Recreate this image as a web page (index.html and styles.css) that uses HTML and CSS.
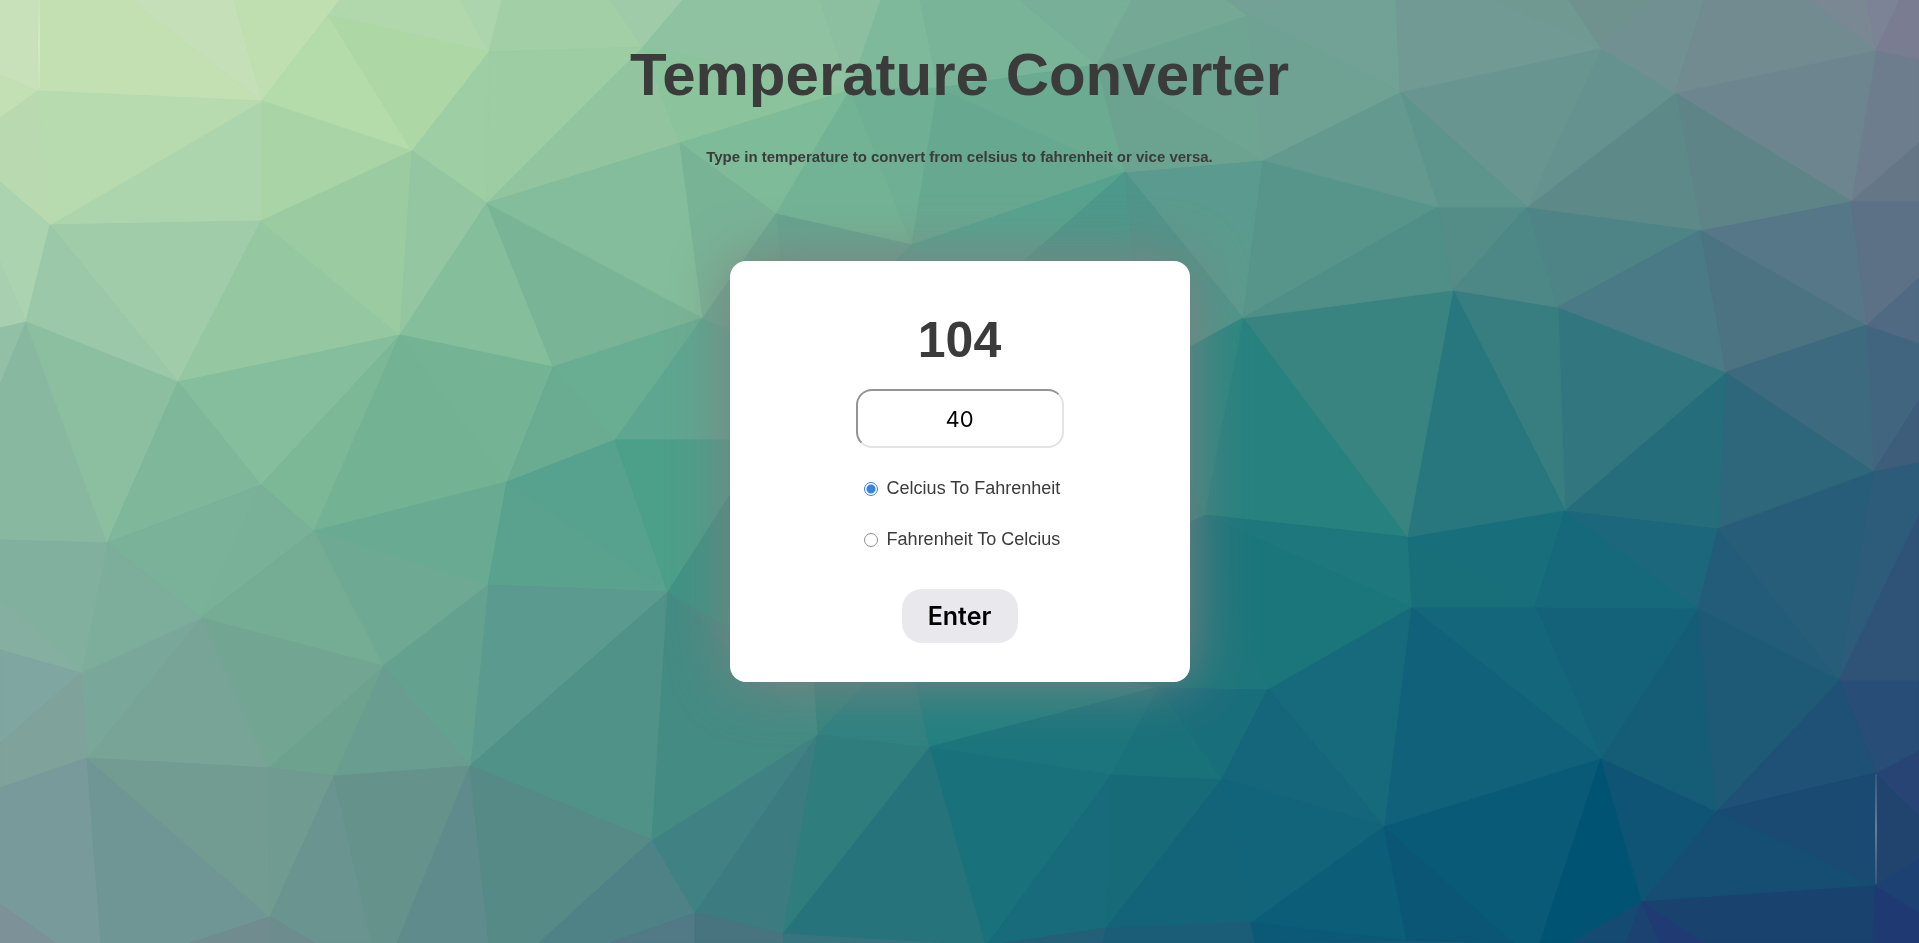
FILE: index.html
```html
<!DOCTYPE html>
<html lang="en">
<head>
  <meta charset="utf-8">
  <meta name="viewport" content="width=device-width, initial-scale=1">
  <title>Temperature Converter</title>
  <link rel="stylesheet" href="styles.css">
</head>
<body>
  <svg class="backdrop" viewBox="0 0 1919 943" preserveAspectRatio="xMidYMid slice" aria-hidden="true">
    <defs>
      <linearGradient id="glint" x1="0" y1="0" x2="0" y2="1">
        <stop offset="0" stop-color="#fff" stop-opacity="0.1"/>
        <stop offset="0.5" stop-color="#fff" stop-opacity="0.3"/>
        <stop offset="1" stop-color="#fff" stop-opacity="0.1"/>
      </linearGradient>
    </defs>
    <g class="mesh" id="mesh"></g>
    <rect x="38" y="0" width="2" height="88" fill="url(#glint)"/>
    <rect x="1875" y="774" width="2" height="110" fill="url(#glint)"/>
  </svg>

  <main class="page">
    <h1 class="title">Temperature Converter</h1>
    <p class="subtitle">Type in temperature to convert from celsius to fahrenheit or vice versa.</p>

    <form class="card" id="converter">
      <output class="result" id="result" for="temperature">104</output>
      <input class="temperature" id="temperature" type="text" inputmode="decimal" value="40" aria-label="Temperature">
      <div class="option">
        <input class="radio" type="radio" name="direction" id="to-fahrenheit" value="f" checked>
        <label for="to-fahrenheit">Celcius To Fahrenheit</label>
      </div>
      <div class="option">
        <input class="radio" type="radio" name="direction" id="to-celcius" value="c">
        <label for="to-celcius">Fahrenheit To Celcius</label>
      </div>
      <button class="submit" type="submit">Enter</button>
    </form>
  </main>
  <script src="script.js"></script>
</body>
</html>
```
FILE: styles.css
```css
* {
  box-sizing: border-box;
}

body {
  margin: 0;
  min-height: 100vh;
  background: #4c9f89;
  color: #3b3b3b;
  font-family: "Liberation Sans", Arial, sans-serif;
}

.backdrop {
  position: fixed;
  inset: 0;
  z-index: -1;
  width: 100%;
  height: 100%;
}

.mesh polygon {
  stroke-width: 1;
  stroke-linejoin: round;
}

.page {
  display: flex;
  flex-direction: column;
  align-items: center;
  padding: 40px 16px;
}

.title {
  margin: 0 0 38px;
  font-size: 60px;
  line-height: 70px;
  text-align: center;
}

.subtitle {
  margin: 0 0 96px;
  font-size: 15px;
  font-weight: bold;
  line-height: 17px;
  text-align: center;
}

.card {
  display: flex;
  flex-direction: column;
  align-items: center;
  width: 460px;
  max-width: 100%;
  padding: 50px 20px 39px;
  border-radius: 16px;
  background: #fff;
  box-shadow: 0 0 60px #808080;
}

.result {
  margin-bottom: 20px;
  font-size: 50px;
  font-weight: bold;
  line-height: 58px;
}

.temperature {
  width: 208px;
  height: 59px;
  margin-bottom: 30px;
  padding: 0 16px;
  border: 2px solid;
  border-color: #949494 #e3e3e3 #e3e3e3 #949494;
  border-radius: 16px;
  background: #fff;
  color: #000;
  font-family: Inter, sans-serif;
  font-size: 22px;
  text-align: center;
}

.option {
  display: flex;
  align-items: center;
  gap: 9px;
  margin: 0 0 30px 5px;
  font-size: 18px;
  line-height: 21px;
}

.radio {
  appearance: none;
  width: 14px;
  height: 14px;
  margin: 0;
  border: 1px solid #8f8f9d;
  border-radius: 50%;
  background: #fff;
}

.radio:checked {
  border-color: #3584e4;
  background: radial-gradient(circle, #3584e4 4px, #fff 5px);
}

.submit {
  min-width: 116px;
  height: 54px;
  margin-top: 9px;
  padding: 0 20px;
  border: 0;
  border-radius: 20px;
  background: #e9e9ed;
  color: #000;
  font-family: Inter, sans-serif;
  font-size: 25px;
  font-weight: 600;
}
```
FILE: script.js
```js
// Shared corner points of the low-poly backdrop.
const points = {
  a: [38, 91], b: [262, 101], c: [328, 15], d: [489, 52], e: [412, 151],
  f: [50, 225], g: [261, 221], h: [487, 203], i: [26, 322], j: [178, 382],
  k: [400, 335], l: [553, 367], m: [615, 440], n: [643, 47], o: [107, 543],
  p: [261, 485], q: [314, 531], r: [507, 482], s: [488, 585], t: [201, 618],
  u: [383, 666], v: [81, 673], w: [87, 758], x: [268, 768], y: [334, 776],
  z: [470, 766], A: [270, 917], B: [668, 592], C: [652, 840], D: [695, 913],
  E: [783, 934], F: [818, 734], G: [930, 747], H: [1112, 774], I: [1222, 779],
  J: [1268, 689], K: [1159, 687], L: [1106, 928], M: [1251, 922], N: [986, 946],
  O: [680, 143], P: [776, 214], Q: [912, 245], R: [703, 318], S: [1125, 172],
  T: [1263, 160], U: [1243, 318], V: [850, 90], W: [938, 88], X: [1097, 65],
  Y: [1247, 15],
  a1: [1400, 92], b1: [1601, 48], c1: [1675, 93], d1: [1876, 50], e1: [1438, 207],
  f1: [1527, 207], g1: [1701, 230], h1: [1851, 201], i1: [1453, 290], j1: [1558, 307],
  k1: [1867, 325], l1: [1726, 372], m1: [1874, 471], n1: [1407, 537], o1: [1565, 510],
  p1: [1718, 528], q1: [1411, 607], r1: [1535, 607], s1: [1698, 608], t1: [1839, 680],
  u1: [1601, 758], v1: [1384, 826], w1: [1716, 811], x1: [1876, 773], y1: [1642, 901],
  z1: [1875, 885], A1: [1407, 940], B1: [1204, 515],
  hA: [790, 358], hB: [1144, 372], hC: [765, 440], hD: [906, 640], hE: [814, 677],
  hF: [940, 335]
};

// Each face: fill, then named points or "x,y" pairs on the outer edge.
const faces = `
c8e1ba 0,0 38,0 a 0,75
c3dfb4 0,75 a 0,118
c3e0b2 a 38,0 130,0 b
c5dfb8 130,0 234,0 b
bfdfb0 b 234,0 340,0 c
b1d8ac c 340,0 460,0 d
add5ad d 460,0 502,0
a3cfa7 d 502,0 610,0 n
a0cba8 610,0 683,0 n
b4dbaa b c e
aed7a6 c d e
9ecfa4 e d h
9ccda3 d n h
91c49f n h O
a9d5a6 b e g
acd4ad b g f
b8daaf a b f
b9dab0 a f 0,182 0,118
acd3af 0,182 f i 0,262
a8cfb0 0,262 i 0,328
a0cca9 f g j
9bc8a9 f j i
95c8a1 g k j
9bcca1 g e k
93c6a1 e h k
84be9b h l k
79b496 h R l
83bd9b h O R
92c0a6 0,328 i 0,385
89b8a1 0,385 i o 0,540
8bbfa0 i j o
85be9c j k p
7fb79b j p o
7cb796 k p q
73b394 k q r
74b495 k l r
69ac91 l r m
69ad92 l m R
78b198 p q t
79b199 p o t
69ab92 q r s
6da993 q s u
74ac94 q u t
57a28e r m B
5aa28e r B s
5ea68f m R hA hC
4c9f89 m hC B
5b9a8e s B z
509188 B z C
65a18f s u z
699d90 u y z
6da28f u x y
72a693 t u x
77a497 t x w
79a79a t w v
7dad9b o t v
82b09f 0,540 o v 0,597
85afa1 0,597 v 0,650
7fa6a0 0,650 v 0,743
7fa29a v w 0,788 0,743
789a9a w 0,788 0,904 55,943 101,943
7c9198 0,904 55,943 0,943
709595 w 101,943 190,943 A
729c92 w x A
6f9b91 x y A
69948f A y 372,943 315,943
65938c y z 397,943 372,943
608b8c z 397,943 489,943
568a86 z C 539,943 489,943
4e8286 C 539,943 610,943 D
517986 D 610,943 695,943
718c8e A 190,943 270,943
6d8c8d A 270,943 315,943
408283 C D F
3c7c81 F D E
307d7d F G E
27737c G E N
448b83 B C F
478b84 B hE F
3f9384 B hC hE
37857f F hE hD
2f8280 F hD G
238080 G hD K
47747f D 695,943 784,943 E
37747f E N 784,943
19727b G H N
186b7a H L N
176b79 H I L
136379 I L M
245f78 N L 1103,943
1b5d77 L 1103,943 1255,943 M
155a76 A1 1255,943 1514,943
0b5977 M A1 1255,943
1c757c G K H
19717a K H I
196e7b K J I
1c767b K B1 J
1d777c hD B1 K
2a8480 hB B1 hD
0b5d78 M v1 A1
0b5575 v1 A1 1514,943
085a77 v1 u1 1540,943 1514,943
015374 u1 y1 1572,943 1540,943
154a73 y1 1572,943 1626,943
1c4272 y1 1626,943 1660,943
203a73 y1 1660,943 1705,943
19426f y1 z1 1873,943 1705,943
1f3a73 z1 1873,943 1919,943 1919,912
1e4173 z1 1919,912 1919,857
21446f x1 z1 1919,857 1919,815
274474 x1 1919,815 1919,750
284d77 t1 x1 1919,750 1919,680
1f5076 w1 x1 t1
1a4971 w1 x1 z1
154d73 w1 y1 z1
0f5475 u1 w1 y1
155c77 u1 s1 w1
1e5a76 s1 t1 w1
14627a r1 s1 u1
14677b q1 r1 u1
11617a q1 v1 u1
176a7b J q1 v1
15667a J I v1
12647a I v1 M
186f7a n1 q1 r1
186f7b n1 o1 r1
16687b o1 r1 s1
1c677b o1 s1 p1
225c78 p1 s1 t1
275d79 p1 m1 t1
2c5c7a m1 t1 1919,515 1919,462
2f5377 t1 1919,515 1919,680
2e667c m1 l1 p1
266d7c l1 o1 p1
32767f j1 l1 o1
387d80 i1 j1 o1
28777e i1 n1 o1
398480 U i1 n1
27827f U n1 B1
1d777c B1 n1 q1
1b767b B1 q1 J
5b9a8e S T U
57958b T e1 U
4f8f88 U e1 i1
548c87 e1 f1 i1
4d8887 f1 j1 i1
4e8485 f1 g1 j1
497a85 g1 l1 j1
4b7382 g1 k1 l1
3e6a7f k1 m1 l1
42657f k1 1919,343 1919,400 m1
3d5d7b m1 1919,400 1919,462
567787 g1 h1 k1
5c7086 h1 k1 1919,278 1919,201
4f6a82 k1 1919,278 1919,343
657786 h1 1919,201 1919,142
6d7d8d h1 1919,142 1919,59 d1
6d858e d1 c1 h1
5f8488 c1 g1 h1
5d8989 c1 f1 g1
65928e b1 c1 f1
68958f a1 b1 f1
5d948c a1 f1 e1
63998f a1 T e1
6da592 X Y T
70a293 Y a1 T
72a195 Y a1 1396,0 1279,0
719a95 1396,0 1495,0 b1 a1
709992 1495,0 1569,0 b1
70928f b1 1569,0 1655,0
709091 b1 c1 1704,0 1655,0
718b91 c1 1704,0 1810,0 d1
7a8894 d1 1810,0 1866,0
7c8396 d1 1866,0 1900,0
7a7d92 d1 1900,0 1919,0 1919,59
8ec2a1 n 683,0 820,0 V
8bbf9f V 820,0 881,0
7fb99c V 881,0 920,0 W
79b498 W 920,0 1020,0 X
77af98 X 1020,0 1132,0
76a995 X 1132,0 1227,0 Y
73a195 Y 1227,0 1279,0
8bc39c n V O
7ebb98 O V P
73b395 V P Q
6fb094 V W Q
67a891 W Q S
6aab92 W X S
6ba390 X S T
78b396 O P R
65a48f P Q hA
69a891 P R hA
57a28e Q hA hF
57a28e Q S hF
4c988a S hF hB
4f9489 S hB U
2c8781 U hB B1
`;

const mesh = document.getElementById("mesh");
faces.trim().split("\n").forEach((line) => {
  const [fill, ...corners] = line.split(" ");
  const polygon = document.createElementNS("http://www.w3.org/2000/svg", "polygon");
  polygon.setAttribute("points", corners.map((c) => points[c] || c).join(" "));
  polygon.setAttribute("fill", `#${fill}`);
  polygon.setAttribute("stroke", `#${fill}`);
  mesh.appendChild(polygon);
});

document.getElementById("converter").addEventListener("submit", (event) => {
  event.preventDefault();
  const value = Number(document.getElementById("temperature").value);
  const toFahrenheit = document.getElementById("to-fahrenheit").checked;
  const converted = toFahrenheit ? value * 9 / 5 + 32 : (value - 32) * 5 / 9;
  document.getElementById("result").textContent = Math.round(converted * 100) / 100;
});
```
